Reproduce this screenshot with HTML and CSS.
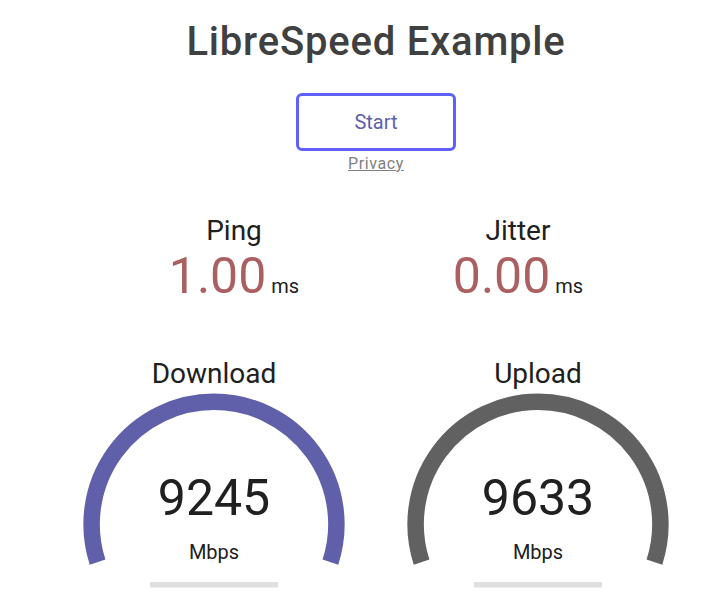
FILE: index.html
```html
<!DOCTYPE html>
<html>
<head>
<meta charset="utf-8">
<title>LibreSpeed Example</title>
<link rel="stylesheet" href="styles.css">
</head>
<body>
<h1 class="title">LibreSpeed Example</h1>
<div class="wrapper">
  <div class="start-btn">Start</div><br>
  <a class="privacy" href="#">Privacy</a>
  <div class="test">
    <div class="test-group">
      <div class="test-area2">
        <div class="test-name">Ping</div>
        <div class="meter-text meter-text--ping">1.00</div>
        <div class="unit">ms</div>
      </div>
      <div class="test-area2">
        <div class="test-name">Jitter</div>
        <div class="meter-text meter-text--ping">0.00</div>
        <div class="unit">ms</div>
      </div>
    </div>
    <div class="test-group">
      <div class="test-area">
        <svg class="meter" viewBox="0 0 320 250" width="320" height="250">
          <path d="M 43.6 208.1 A 122.4 122.4 0 1 1 276.4 208.1" fill="none" stroke="#6060AA" stroke-width="16.5"/>
          <rect x="96" y="228" width="128" height="5.5" fill="#E0E0E0"/>
        </svg>
        <div class="test-name">Download</div>
        <div class="meter-text">9245</div>
        <div class="unit">Mbps</div>
      </div>
      <div class="test-area">
        <svg class="meter" viewBox="0 0 320 250" width="320" height="250">
          <path d="M 43.6 208.1 A 122.4 122.4 0 1 1 276.4 208.1" fill="none" stroke="#616161" stroke-width="16.5"/>
          <rect x="96" y="228" width="128" height="5.5" fill="#E0E0E0"/>
        </svg>
        <div class="test-name">Upload</div>
        <div class="meter-text">9633</div>
        <div class="unit">Mbps</div>
      </div>
    </div>
  </div>
</div>
</body>
</html>
```
FILE: styles.css
```css
html, body {
  margin: 0;
  padding: 0;
  background: #FFFFFF;
  color: #202020;
}
body {
  padding-left: 40px;
  text-align: center;
  font-family: Roboto, "Liberation Sans", sans-serif;
  font-size: 20px;
}
.title {
  color: #404040;
  font-size: 40px;
  font-weight: 500;
  letter-spacing: 0.8px;
  margin: 18px 0 28px;
}
.start-btn {
  display: inline-block;
  color: #6060AA;
  border: 3px solid #6060FF;
  border-radius: 6px;
  box-sizing: border-box;
  width: 160px;
  height: 58px;
  line-height: 52px;
  vertical-align: top;
}
.privacy {
  display: block;
  margin-top: 3px;
  font-size: 16px;
  letter-spacing: 0.6px;
  color: #808080;
}
.test {
  margin-top: 41px;
}
.test-group {
  display: flex;
  justify-content: center;
  gap: 4px;
}
.test-area2 {
  width: 280px;
  height: 140px;
}
.test-area2 .test-name {
  font-size: 28px;
}
.test-area2 .meter-text {
  display: inline-block;
  font-size: 50px;
}
.test-area2 .unit {
  display: inline-block;
}
.meter-text--ping {
  color: #AA6060;
}
.test-area {
  display: grid;
  width: 320px;
  height: 250px;
}
.test-area > * {
  grid-area: 1 / 1;
}
.meter {
  display: block;
  width: 320px;
  height: 250px;
}
.test-area .test-name {
  align-self: start;
  margin-top: 2.8px;
  font-size: 28px;
}
.test-area .meter-text {
  align-self: end;
  margin-bottom: 77.5px;
  font-size: 50px;
}
.test-area .unit {
  align-self: end;
  margin-bottom: 40px;
}
```
